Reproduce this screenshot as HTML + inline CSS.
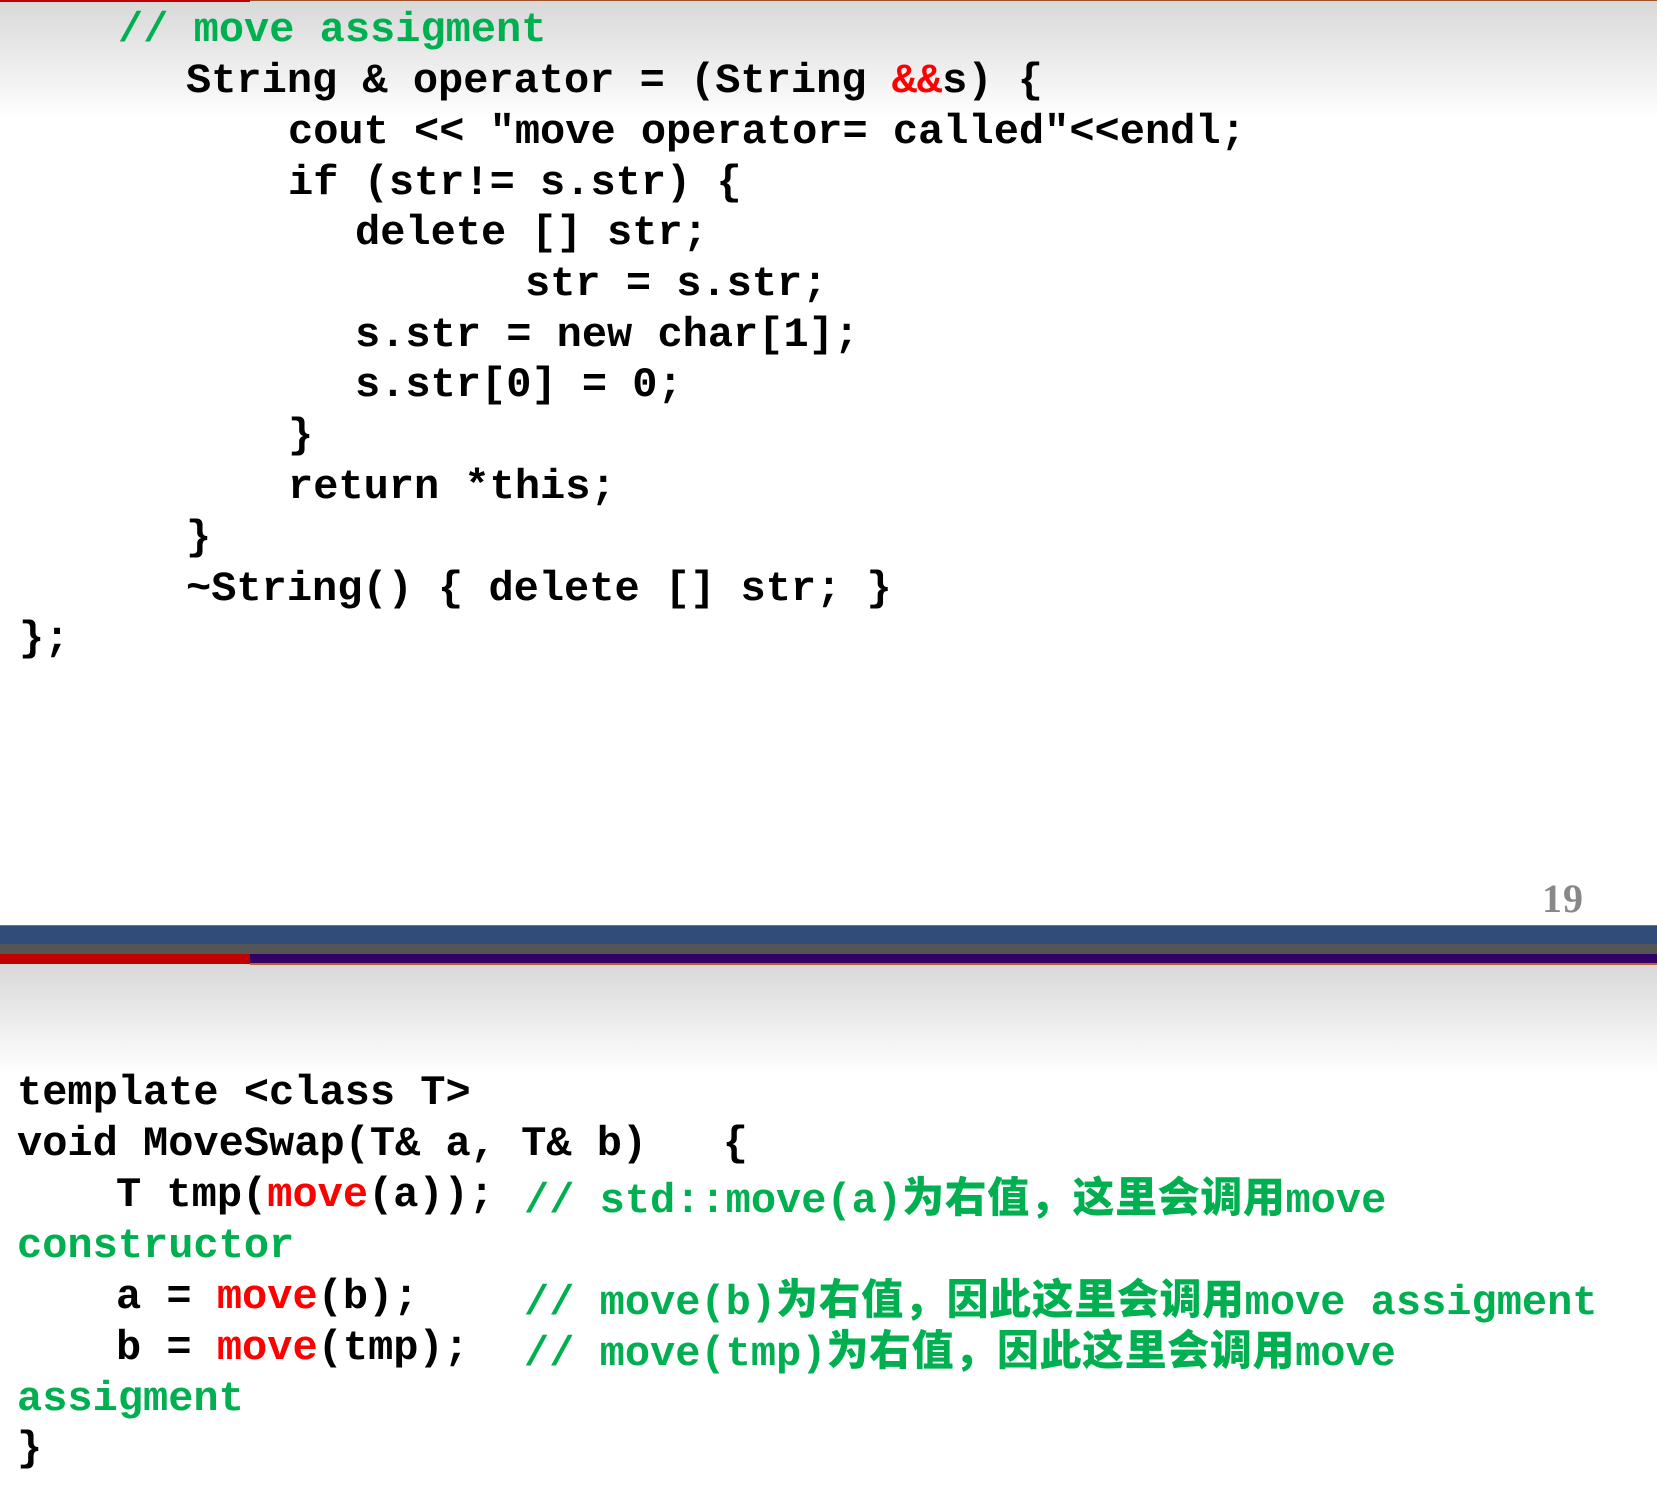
<!DOCTYPE html>
<html><head><meta charset="utf-8"><style>
body{margin:0;width:1657px;height:1486px;position:relative;overflow:hidden;background:#fff;
font-family:"Liberation Mono","Noto Sans CJK SC",monospace;font-weight:bold;font-size:42px;color:#000}
.l{position:absolute;white-space:pre;line-height:50px;height:50px}
.g{color:#00b050}.r{color:#ff0000}
.cj{font-family:"Noto Sans CJK SC",sans-serif;font-weight:900;font-size:42px;letter-spacing:0.6px}
</style></head><body>
<div style="position:absolute;left:0;top:0;width:1657px;height:120px;background:linear-gradient(#d8d8d8,#fff)"></div>
<div style="position:absolute;left:0;top:0;width:250px;height:2px;background:#c00000"></div>
<div style="position:absolute;left:250px;top:0;width:1407px;height:1px;background:#a0522d"></div>
<div style="position:absolute;left:0;top:964px;width:1657px;height:110px;background:linear-gradient(#d8d8d8,#fff)"></div>
<div style="position:absolute;left:0;top:925px;width:1657px;height:19px;background:#304d7a;border-top:1px solid #7a7a40"></div>
<div style="position:absolute;left:0;top:944px;width:1657px;height:10px;background:#555"></div>
<div style="position:absolute;left:0;top:954px;width:250px;height:10px;background:#c00000"></div>
<div style="position:absolute;left:250px;top:954px;width:1407px;height:9px;background:#330066;border-bottom:2px solid #c06030"></div>
<div class="l" style="left:1542px;top:874px;color:#888;font-family:'Liberation Serif',serif;font-weight:bold;font-size:40px;letter-spacing:1px">19</div>

<div class="l g" style="left:118px;top:5px">// move assigment</div>
<div class="l" style="left:186px;top:56px">String &amp; operator = (String <span class="r">&amp;&amp;</span>s) {</div>
<div class="l" style="left:288px;top:107px">cout &lt;&lt; "move operator= called"&lt;&lt;endl;</div>
<div class="l" style="left:288px;top:158px">if (str!= s.str) {</div>
<div class="l" style="left:355px;top:208px">delete [] str;</div>
<div class="l" style="left:525px;top:259px">str = s.str;</div>
<div class="l" style="left:355px;top:310px">s.str = new char[1];</div>
<div class="l" style="left:355px;top:360px">s.str[0] = 0;</div>
<div class="l" style="left:288px;top:411px">}</div>
<div class="l" style="left:288px;top:462px">return *this;</div>
<div class="l" style="left:186px;top:513px">}</div>
<div class="l" style="left:186px;top:564px">~String() { delete [] str; }</div>
<div class="l" style="left:19px;top:614px">};</div>

<div class="l" style="left:17px;top:1068px">template &lt;class T&gt;</div>
<div class="l" style="left:17px;top:1119px">void MoveSwap(T&amp; a, T&amp; b)   {</div>
<div class="l" style="left:116px;top:1170px">T tmp(<span class="r">move</span>(a));</div>
<div class="l g" style="left:524px;top:1170px">// std::move(a)<span class="cj">为右值，这里会调用</span>move</div>
<div class="l g" style="left:17px;top:1221px">constructor</div>
<div class="l" style="left:116px;top:1272px">a = <span class="r">move</span>(b);</div>
<div class="l g" style="left:524px;top:1272px">// move(b)<span class="cj">为右值，因此这里会调用</span>move assigment</div>
<div class="l" style="left:116px;top:1323px">b = <span class="r">move</span>(tmp);</div>
<div class="l g" style="left:524px;top:1323px">// move(tmp)<span class="cj">为右值，因此这里会调用</span>move</div>
<div class="l g" style="left:17px;top:1374px">assigment</div>
<div class="l" style="left:17px;top:1424px">}</div>
</body></html>
